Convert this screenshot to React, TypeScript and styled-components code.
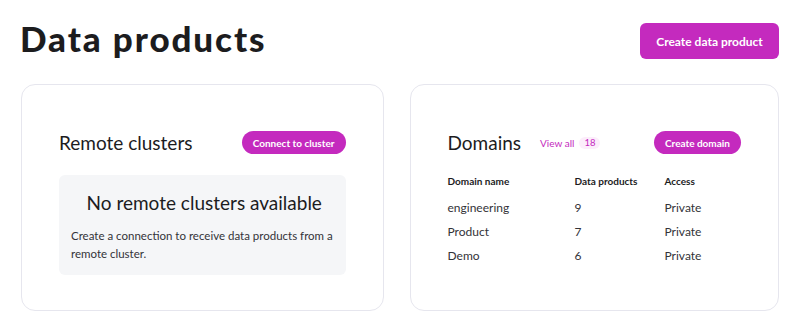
import styled, { createGlobalStyle } from 'styled-components';

const GlobalStyle = createGlobalStyle`
  * {
    box-sizing: border-box;
  }
  body {
    margin: 0;
    background: #ffffff;
    font-family: Lato, "Noto Sans", sans-serif;
    color: #1c1c1e;
  }
`;

const domains = [
  { name: 'engineering', products: 9, access: 'Private' },
  { name: 'Product', products: 7, access: 'Private' },
  { name: 'Demo', products: 6, access: 'Private' },
];

export default function App() {
  return (
    <>
      <GlobalStyle />
      <Page>
        <Header>
          <Title>Data products</Title>
          <PrimaryButton>Create data product</PrimaryButton>
        </Header>

        <Cards>
          <Card>
            <CardHeader>
              <CardTitle>Remote clusters</CardTitle>
              <PillButton>Connect to cluster</PillButton>
            </CardHeader>
            <EmptyBox>
              <EmptyTitle>No remote clusters available</EmptyTitle>
              <EmptyText>
                Create a connection to receive data products from a remote cluster.
              </EmptyText>
            </EmptyBox>
          </Card>

          <Card>
            <CardHeader>
              <TitleGroup>
                <CardTitle>Domains</CardTitle>
                <ViewAll>View all</ViewAll>
                <CountBadge>18</CountBadge>
              </TitleGroup>
              <PillButton>Create domain</PillButton>
            </CardHeader>
            <Table>
              <HeadCell>Domain name</HeadCell>
              <HeadCell>Data products</HeadCell>
              <HeadCell>Access</HeadCell>
              {domains.map((d) => (
                <Row key={d.name}>
                  <Cell>{d.name}</Cell>
                  <Cell>{d.products}</Cell>
                  <Cell>{d.access}</Cell>
                </Row>
              ))}
            </Table>
          </Card>
        </Cards>
      </Page>
    </>
  );
}

const Page = styled.div`
  padding: 20px 21px 20px 20px;
`;

const Header = styled.div`
  display: flex;
  align-items: flex-start;
  justify-content: space-between;
  height: 64px;
`;

const Title = styled.h1`
  margin: 0;
  font-size: 35px;
  line-height: 36px;
  font-weight: 900;
  color: #1c1c1e;
  letter-spacing: 1.9px;
`;

const PrimaryButton = styled.button`
  margin-top: 3px;
  width: 139px;
  height: 36px;
  border: none;
  border-radius: 6px;
  background: #c42abe;
  color: #ffffff;
  font-family: inherit;
  font-size: 12px;
  font-weight: 700;
  cursor: pointer;
`;

const Cards = styled.div`
  display: grid;
  grid-template-columns: 363fr 370fr;
  gap: 26px;
  padding-left: 1px;
`;

const Card = styled.div`
  height: 227px;
  border: 1px solid #e6e6ee;
  border-radius: 14px;
  padding: 46px 37px 36px;
  display: flex;
  flex-direction: column;
`;

const CardHeader = styled.div`
  display: flex;
  align-items: center;
  justify-content: space-between;
  height: 23px;
`;

const TitleGroup = styled.div`
  display: flex;
  align-items: center;
`;

const CardTitle = styled.h2`
  margin: 0;
  font-size: 19px;
  font-weight: 400;
  color: #1c1c1e;
`;

const ViewAll = styled.a`
  margin-left: 19px;
  font-size: 10px;
  color: #c42abe;
  cursor: pointer;
`;

const CountBadge = styled.span`
  margin-left: 5px;
  padding: 0 5px;
  height: 12px;
  line-height: 12px;
  border-radius: 6px;
  background: #fcedfb;
  color: #c42abe;
  font-size: 9.5px;
`;

const PillButton = styled.button`
  height: 23px;
  padding: 0 11px;
  border: none;
  border-radius: 12px;
  background: #c42abe;
  color: #ffffff;
  font-family: inherit;
  font-size: 10px;
  font-weight: 700;
  cursor: pointer;
`;

const EmptyBox = styled.div`
  margin-top: 21px;
  flex: 1;
  background: #f5f6f8;
  border-radius: 6px;
  padding: 16px 8px 12px 12px;
`;

const EmptyTitle = styled.div`
  text-align: center;
  font-size: 19px;
  color: #1c1c1e;
`;

const EmptyText = styled.p`
  margin: 13px 0 0;
  font-size: 11.5px;
  line-height: 18px;
  color: #333338;
`;

const Table = styled.div`
  margin-top: 21px;
  display: grid;
  grid-template-columns: 127px 90px 1fr;
  row-gap: 10px;
`;

const Row = styled.div`
  display: contents;
`;

const HeadCell = styled.div`
  font-size: 10px;
  font-weight: 700;
  color: #1c1c1e;
  margin-bottom: 4px;
`;

const Cell = styled.div`
  font-size: 12px;
  line-height: 14px;
  color: #333338;
`;
